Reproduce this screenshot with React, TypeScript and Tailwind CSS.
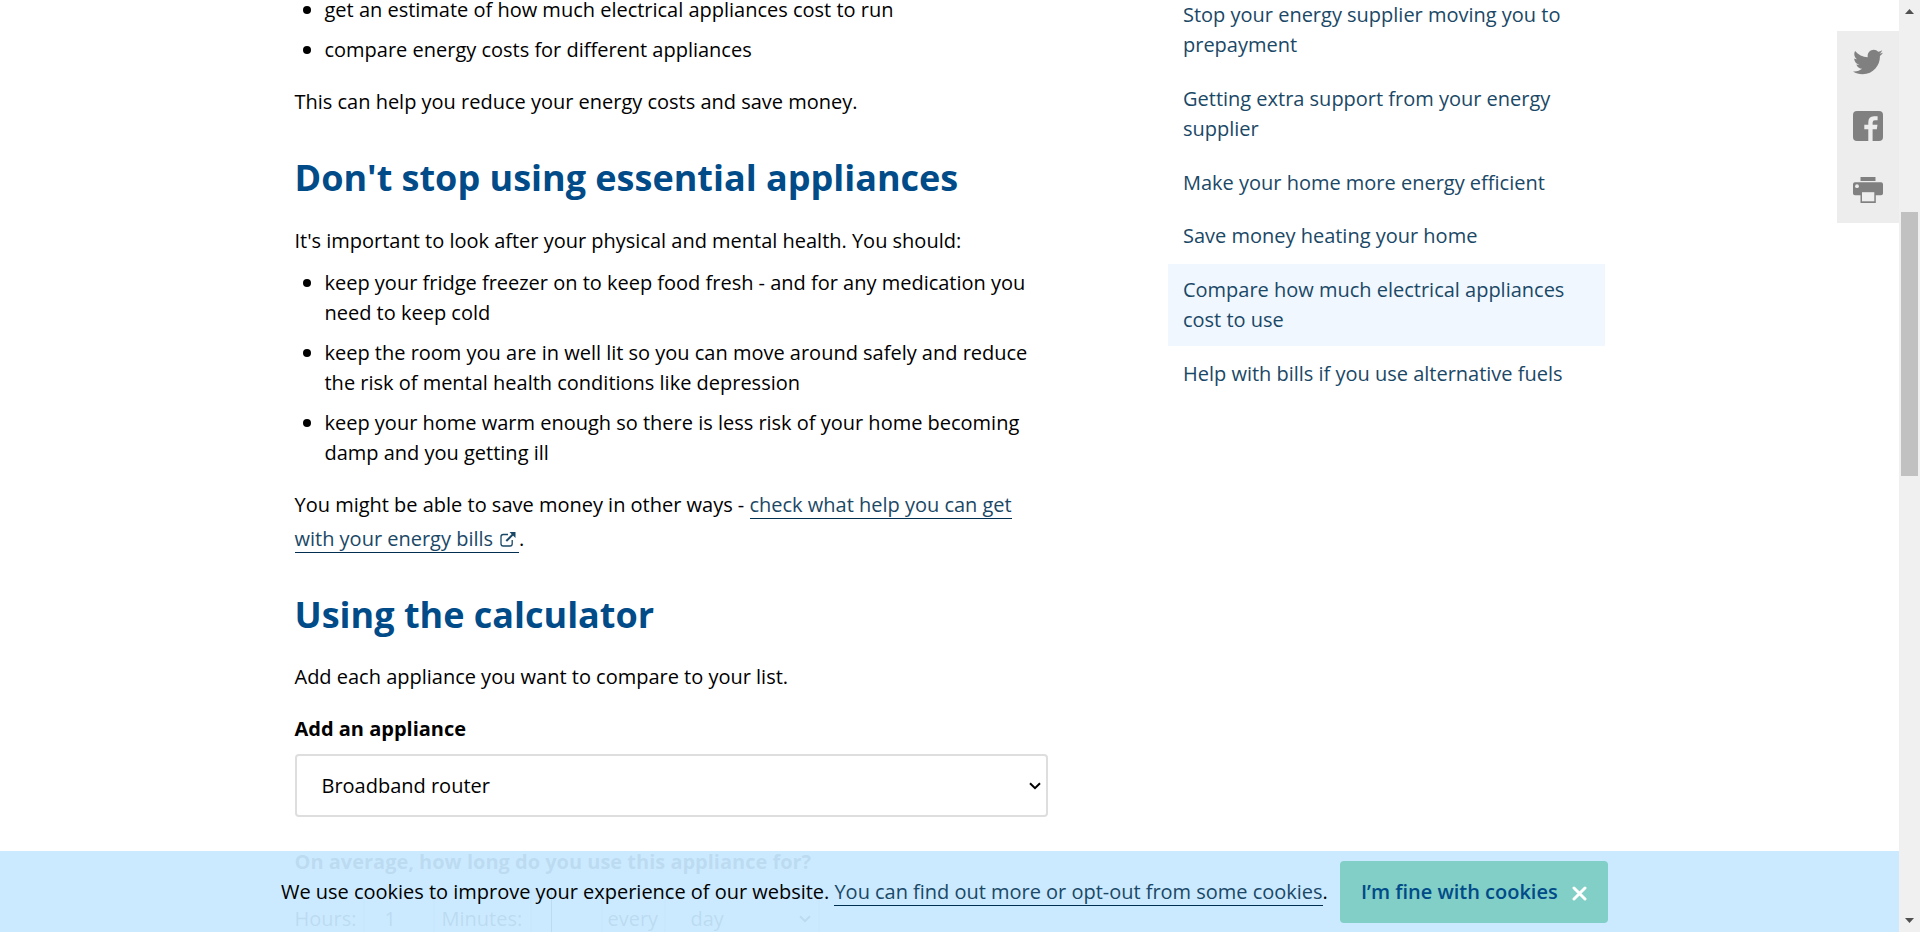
import React from "react";
import { FaTwitter } from "react-icons/fa";

const essentials = [
  "keep your fridge freezer on to keep food fresh - and for any medication you need to keep cold",
  "keep the room you are in well lit so you can move around safely and reduce the risk of mental health conditions like depression",
  "keep your home warm enough so there is less risk of your home becoming damp and you getting ill",
];

const related = [
  { label: "Stop your energy supplier moving you to prepayment" },
  { label: "Getting extra support from your energy supplier" },
  { label: "Make your home more energy efficient" },
  { label: "Save money heating your home" },
  { label: "Compare how much electrical appliances cost to use", current: true },
  { label: "Help with bills if you use alternative fuels" },
];

function Bullets({ items }: { items: string[] }) {
  return (
    <ul className="flex flex-col gap-2.5">
      {items.map((item) => (
        <li key={item} className="flex leading-[30px]">
          <span className="mt-[11px] mr-[14px] ml-2 size-2 shrink-0 rounded-full bg-black" />
          <span>{item}</span>
        </li>
      ))}
    </ul>
  );
}

function ChevronDown() {
  return (
    <svg width="12" height="8" viewBox="0 0 12 8" fill="none" stroke="currentColor" strokeWidth="2">
      <path d="M1 1.2 6 6.2 11 1.2" />
    </svg>
  );
}

function ExternalIcon() {
  return (
    <svg className="ml-[7px] inline-block align-[-1px]" width="16" height="15" viewBox="0 0 16 15" fill="none" stroke="currentColor">
      <path d="M8 2.5H3.2Q1 2.5 1 4.7V11.8Q1 14 3.2 14H10Q12.2 14 12.2 11.8V8" strokeWidth="1.3" />
      <path d="M6.3 9 13 2.3" strokeWidth="2" />
      <path d="M9.5 0H15.5V6Z" fill="currentColor" stroke="none" />
    </svg>
  );
}

function FacebookIcon() {
  return (
    <svg width="30" height="30" viewBox="0 0 30 30">
      <rect width="30" height="30" rx="4" fill="#808080" />
      <path d="M15.3 30V18.2H11.3V13.8H15.3V11.2Q15.3 5.2 21 5.2H24.6V9.2H22Q19.6 9.2 19.6 11.4V13.8H24.5L23.8 18.2H19.6V30Z" fill="#ededed" />
    </svg>
  );
}

function PrintIcon() {
  return (
    <svg width="30" height="26" viewBox="0 0 30 26" fill="#808080">
      <path d="M7.5 0H22.5V4H7.5Z" />
      <path d="M2 5.2H28Q30 5.2 30 7.2V16.5Q30 18.3 28 18.3H22.8V26H7.5V18.3H2Q0 18.3 0 16.5V7.2Q0 5.2 2 5.2Z" />
      <path d="M9 15.2H21.3V24.3H9Z" fill="#ededed" />
      <circle cx="4" cy="9.2" r="1.9" fill="#ededed" />
    </svg>
  );
}

export default function App() {
  return (
    <div className="relative flex h-[932px] w-[1920px] overflow-hidden bg-white font-['Open_Sans','Noto_Sans',sans-serif] text-xl tracking-[-0.008px] text-black">
      <div className="flex flex-1 items-start pl-[294.5px]">
        <main className="-mt-[5px] w-[753px] shrink-0">
          <Bullets
            items={[
              "get an estimate of how much electrical appliances cost to run",
              "compare energy costs for different appliances",
            ]}
          />
          <p className="mt-5 leading-[34px]">This can help you reduce your energy costs and save money.</p>
          <h2 className="mt-8 text-4xl leading-[54px] font-bold text-[#004b88]">Don't stop using essential appliances</h2>
          <p className="mt-[19px] mb-2.5 leading-[34px]">It's important to look after your physical and mental health. You should:</p>
          <div className="w-[740px]">
            <Bullets items={essentials} />
          </div>
          <p className="mt-5 leading-[34px]">
            You might be able to save money in other ways -{" "}
            <a className="border-b border-[#002f52] text-[#1a4866]">
              check what help you can get
              <br />
              with your energy bills
              <ExternalIcon />
              <span className="inline-block w-[3px]" />
            </a>
            .
          </p>
          <h2 className="mt-8 text-4xl leading-[54px] font-bold text-[#004b88]">Using the calculator</h2>
          <p className="mt-[18px] leading-[34px]">Add each appliance you want to compare to your list.</p>
          <div className="mt-5 leading-[30px] font-bold">Add an appliance</div>
          <div className="mt-2.5 flex h-[63px] items-center justify-between rounded-sm border-2 border-[#dedede] pr-[5px] pl-[25px]">
            <span>Broadband router</span>
            <ChevronDown />
          </div>
          <div className="mt-[30px] leading-[30px] font-bold">On average, how long do you use this appliance for?</div>
          <div className="mt-[11px] flex h-[62px] items-center">
            <span className="w-[68px]">Hours:</span>
            <span className="flex h-full w-[72px] items-center border-x-2 border-[#dedede] pl-5">1</span>
            <span className="ml-[7px] w-[88px]">Minutes:</span>
            <span className="h-full w-[73px] border-x-2 border-[#dedede] pl-[19px]">
              <span className="block h-full w-px bg-black" />
            </span>
            <span className="ml-[5px] w-[56px]">every</span>
            <span className="flex h-full w-[156px] items-center justify-between border-x-2 border-[#dedede] pr-[7px] pl-[25px]">
              day
              <ChevronDown />
            </span>
          </div>
        </main>
        <aside className="-mt-[11px] ml-[120.5px] w-[437px] shrink-0 leading-[30px] text-[#1a4866]">
          {related.map(({ label, current }) => (
            <div
              key={label}
              className={
                current
                  ? "mb-0.5 bg-[#f0f7ff] pt-[11px] pr-5 pb-[10.8px] pl-[15px]"
                  : "mb-0.5 pt-[11px] pr-5 pb-[10.8px] pl-[15px]"
              }
            >
              {label}
            </div>
          ))}
        </aside>
      </div>

      <div className="flex w-[21px] flex-col items-center justify-between bg-[#f0f0f0] pt-[9px] pb-[9px] text-[#505050]">
        <svg width="9" height="5" viewBox="0 0 9 5" fill="currentColor">
          <path d="M4.5 0 9 5H0Z" />
        </svg>
        <div className="mt-[198px] mb-auto h-[264px] w-[17px] bg-[#c1c1c1]" />
        <svg width="9" height="5" viewBox="0 0 9 5" fill="currentColor">
          <path d="M0 0H9L4.5 5Z" />
        </svg>
      </div>

      <div className="absolute top-[31px] right-[21px] flex h-[192px] w-[62px] flex-col items-center bg-[#ededed]">
        <FaTwitter className="mt-4 text-[#808080]" size={30} />
        <div className="mt-[34px]">
          <FacebookIcon />
        </div>
        <div className="mt-9">
          <PrintIcon />
        </div>
      </div>

      <div className="absolute bottom-0 left-0 flex h-[81px] w-[1899px] bg-[#c8e9ff]/94 pt-2.5 pl-[281px]">
        <p className="w-[1059px] pt-3.5 leading-[34px] tracking-[-0.02px] whitespace-nowrap">
          We use cookies to improve your experience of our website.{" "}
          <a className="border-b border-[#002f52] text-[#1a4866]">You can find out more or opt-out from some cookies</a>.
        </p>
        <button className="flex h-[62px] w-[268px] items-center rounded-sm bg-[#81cfc6] pl-[21px] font-semibold text-[#004b88]">
          I’m fine with cookies
          <svg className="mt-[3px] ml-3.5" width="15" height="15" viewBox="0 0 15 15" fill="none" stroke="white" strokeWidth="3" strokeLinecap="round">
            <path d="M2 2 13 13M13 2 2 13" />
          </svg>
        </button>
      </div>
    </div>
  );
}
